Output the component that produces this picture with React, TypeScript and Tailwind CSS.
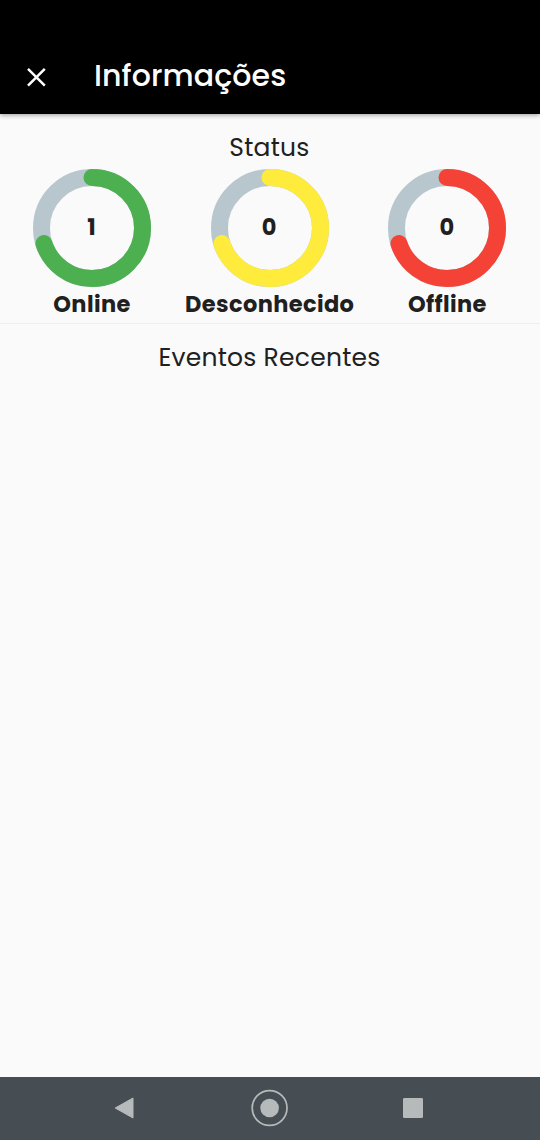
type StatusItem = {
  label: string;
  value: number;
  ring: string;
};

const STATUS_ITEMS: StatusItem[] = [
  { label: "Online", value: 1, ring: "stroke-[#4caf50]" },
  { label: "Desconhecido", value: 0, ring: "stroke-[#ffeb3b]" },
  { label: "Offline", value: 0, ring: "stroke-[#f44336]" },
];

function StatusRing({ item }: { item: StatusItem }) {
  return (
    <div className="flex flex-col items-center">
      <div className="grid h-[118px] w-[118px] place-items-center">
        <svg viewBox="0 0 118 118" className="col-start-1 row-start-1 h-full w-full" fill="none">
          <circle cx="59" cy="59" r="50.5" strokeWidth="17" className="stroke-[#b8c7cd]" />
          <circle
            cx="59"
            cy="59"
            r="50.5"
            strokeWidth="17"
            strokeLinecap="round"
            pathLength={100}
            strokeDasharray="70 100"
            transform="rotate(-90 59 59)"
            className={item.ring}
          />
        </svg>
        <span className="col-start-1 row-start-1 pr-px pb-0.5 text-[22.5px] leading-none font-bold">
          {item.value}
        </span>
      </div>
      <span className="mt-0.5 text-[22.5px] leading-[30px] font-bold tracking-[0.375px] whitespace-nowrap">
        {item.label}
      </span>
    </div>
  );
}

function NavigationBar() {
  return (
    <nav className="flex h-[63px] items-center justify-between bg-[#464d53] pr-[116px] pb-px pl-[113px] text-[#b6babb]">
      <button type="button" aria-label="Voltar">
        <svg width="22" height="22" viewBox="0 0 22 22" fill="currentColor">
          <path
            d="M2.2 11 20 1v20z"
            stroke="currentColor"
            strokeWidth="1"
            strokeLinejoin="round"
          />
        </svg>
      </button>
      <button type="button" aria-label="Início">
        <svg width="38" height="38" viewBox="0 0 38 38" fill="none">
          <circle cx="19.6" cy="19" r="17.4" stroke="currentColor" strokeWidth="1.7" />
          <circle cx="19.6" cy="19" r="9.3" fill="currentColor" />
        </svg>
      </button>
      <button type="button" aria-label="Recentes">
        <svg width="22" height="22" viewBox="0 0 22 22" fill="currentColor">
          <rect x="1" y="1" width="20" height="20" rx="1.3" />
        </svg>
      </button>
    </nav>
  );
}

export default function App() {
  return (
    <div className="flex h-screen flex-col bg-[#fafafa] font-['Poppins','Inter',sans-serif] text-[#202020]">
      <header className="z-10 flex h-[114px] items-center bg-black pt-[39px] pl-[26px] text-white shadow-[0_1px_5px_rgba(0,0,0,0.4)]">
        <button type="button" aria-label="Fechar">
          <svg width="20" height="20" viewBox="0 0 20 20" fill="none" stroke="currentColor" strokeWidth="2.5">
            <path d="M2 1.8 18.8 18.6M18.8 1.8 2 18.6" />
          </svg>
        </button>
        <h1 className="-mt-px ml-12 text-[30px] leading-9 font-medium tracking-[0.1px]">Informações</h1>
      </header>

      <main className="flex-1">
        <section className="h-[210px] border-b border-[#efefef] pt-4">
          <h2 className="pr-px text-center text-[25px] leading-9 font-normal tracking-[0.25px]">Status</h2>
          <div className="mt-[3px] grid grid-cols-3 pr-[3.8px] pl-[3.2px]">
            {STATUS_ITEMS.map((item) => (
              <StatusRing key={item.label} item={item} />
            ))}
          </div>
        </section>
        <section className="pt-4">
          <h2 className="pr-px text-center text-[25px] leading-9 font-normal tracking-[0.25px]">
            Eventos Recentes
          </h2>
        </section>
      </main>

      <NavigationBar />
    </div>
  );
}
